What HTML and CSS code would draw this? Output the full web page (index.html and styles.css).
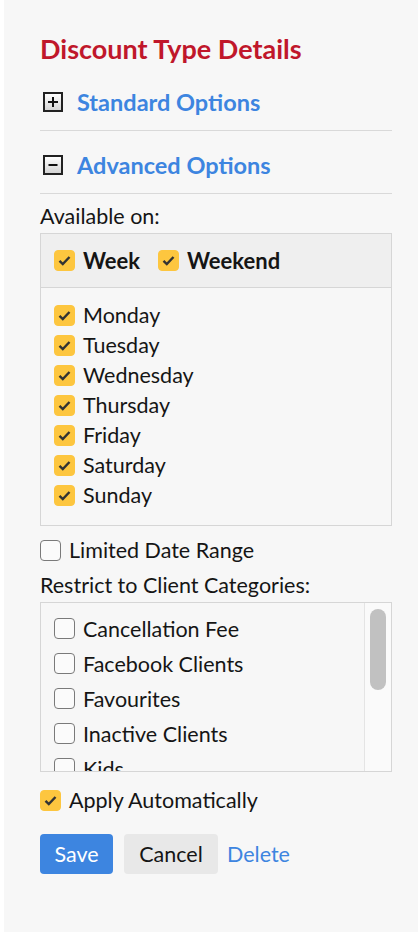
FILE: index.html
```
<!doctype html>
<html>
<head>
<meta charset="utf-8">
<title>Discount Type Details</title>
<link rel="stylesheet" href="styles.css">
</head>
<body>

<div class="panel">

<h2 class="panel-title">Discount Type Details</h2>

<div class="toggle-row">
<span class="toggle-box"><svg width="12" height="12" viewBox="0 0 12 12"><path d="M1 6h10M6 1v10" stroke="#111" stroke-width="2"/></svg></span>
<a class="toggle-link" href="#">Standard Options</a>
</div>

<div class="toggle-row">
<span class="toggle-box"><svg width="12" height="12" viewBox="0 0 12 12"><path d="M1.5 6h9" stroke="#111" stroke-width="2"/></svg></span>
<a class="toggle-link" href="#">Advanced Options</a>
</div>

<div class="field-label">Available on:</div>

<div class="days-box">
<div class="days-head">
<label class="check-item bold"><span class="check on"><svg width="13" height="11" viewBox="0 0 13 11"><path d="M1.5 5.8l3.3 3.3L11.5 2" fill="none" stroke="#333" stroke-width="2.4"/></svg></span>Week</label>
<label class="check-item bold"><span class="check on"><svg width="13" height="11" viewBox="0 0 13 11"><path d="M1.5 5.8l3.3 3.3L11.5 2" fill="none" stroke="#333" stroke-width="2.4"/></svg></span>Weekend</label>
</div>
<div class="days-list">
<label class="check-item"><span class="check on"><svg width="13" height="11" viewBox="0 0 13 11"><path d="M1.5 5.8l3.3 3.3L11.5 2" fill="none" stroke="#333" stroke-width="2.4"/></svg></span>Monday</label>
<label class="check-item"><span class="check on"><svg width="13" height="11" viewBox="0 0 13 11"><path d="M1.5 5.8l3.3 3.3L11.5 2" fill="none" stroke="#333" stroke-width="2.4"/></svg></span>Tuesday</label>
<label class="check-item"><span class="check on"><svg width="13" height="11" viewBox="0 0 13 11"><path d="M1.5 5.8l3.3 3.3L11.5 2" fill="none" stroke="#333" stroke-width="2.4"/></svg></span>Wednesday</label>
<label class="check-item"><span class="check on"><svg width="13" height="11" viewBox="0 0 13 11"><path d="M1.5 5.8l3.3 3.3L11.5 2" fill="none" stroke="#333" stroke-width="2.4"/></svg></span>Thursday</label>
<label class="check-item"><span class="check on"><svg width="13" height="11" viewBox="0 0 13 11"><path d="M1.5 5.8l3.3 3.3L11.5 2" fill="none" stroke="#333" stroke-width="2.4"/></svg></span>Friday</label>
<label class="check-item"><span class="check on"><svg width="13" height="11" viewBox="0 0 13 11"><path d="M1.5 5.8l3.3 3.3L11.5 2" fill="none" stroke="#333" stroke-width="2.4"/></svg></span>Saturday</label>
<label class="check-item"><span class="check on"><svg width="13" height="11" viewBox="0 0 13 11"><path d="M1.5 5.8l3.3 3.3L11.5 2" fill="none" stroke="#333" stroke-width="2.4"/></svg></span>Sunday</label>
</div>
</div>

<label class="check-item single"><span class="check"></span>Limited Date Range</label>

<div class="field-label restrict">Restrict to Client Categories:</div>

<div class="category-box">
<div class="category-list">
<label class="check-item cat"><span class="check"></span>Cancellation Fee</label>
<label class="check-item cat"><span class="check"></span>Facebook Clients</label>
<label class="check-item cat"><span class="check"></span>Favourites</label>
<label class="check-item cat"><span class="check"></span>Inactive Clients</label>
<label class="check-item cat"><span class="check"></span>Kids</label>
</div>
<div class="scroll-track"><div class="scroll-thumb"></div></div>
</div>

<label class="check-item single apply"><span class="check on"><svg width="13" height="11" viewBox="0 0 13 11"><path d="M1.5 5.8l3.3 3.3L11.5 2" fill="none" stroke="#333" stroke-width="2.4"/></svg></span>Apply Automatically</label>

<div class="actions">
<button class="btn btn-save">Save</button>
<button class="btn btn-cancel">Cancel</button>
<a class="delete-link" href="#">Delete</a>
</div>

</div>

</body>
</html>
```

FILE: styles.css
```
body {
	margin: 0;
	background: #ffffff;
	font-family: Lato, "Open Sans", Arial, sans-serif;
	color: #151515;
}

div.panel {
	margin-left: 4px;
	min-height: 932px;
	padding: 0 26px 0 36px;
	background: #f7f7f7;
	box-sizing: border-box;
}

h2.panel-title {
	margin: 0;
	padding-top: 33px;
	height: 35px;
	line-height: 32px;
	font-size: 27px;
	font-weight: bold;
	color: #c0172b;
	white-space: nowrap;
}

div.toggle-row {
	display: flex;
	align-items: center;
	padding: 20px 0 14px 3px;
	height: 28px;
	border-bottom: solid 1px #d9d9d9;
}

span.toggle-box {
	display: flex;
	align-items: center;
	justify-content: center;
	width: 16px;
	height: 16px;
	border: solid 2px #222;
	background: linear-gradient(#ffffff, #d4d4d4);
	margin-right: 14px;
}

a.toggle-link {
	font-size: 23.5px;
	font-weight: bold;
	color: #3d85e0;
	text-decoration: none;
	line-height: 28px;
}

div.field-label {
	margin-top: 10px;
	margin-bottom: 5px;
	font-size: 21.5px;
	line-height: 24px;
	white-space: nowrap;
}

div.field-label.restrict {
	margin-top: 11px;
}

div.days-box {
	border: solid 1px #d6d6d6;
}

div.days-head {
	display: flex;
	gap: 18px;
	padding: 13px 13px;
	background: #efefef;
	border-bottom: solid 1px #d6d6d6;
}

div.days-list {
	padding: 12px 13px 15px;
}

label.check-item {
	display: flex;
	align-items: center;
	height: 30px;
	font-size: 21.5px;
	white-space: nowrap;
}

label.check-item.bold {
	height: 27px;
	font-size: 22px;
	font-weight: bold;
}

label.check-item.single {
	height: 24px;
	margin-top: 12px;
}

label.check-item.apply {
	margin-top: 16px;
}

label.check-item.cat {
	height: 35px;
	flex-shrink: 0;
}

span.check {
	display: flex;
	align-items: center;
	justify-content: center;
	width: 19px;
	height: 19px;
	margin-right: 8px;
	border: solid 1px #7a7a7a;
	border-radius: 4px;
	background: #fbfbfb;
	flex-shrink: 0;
}

span.check.on {
	background: #fdc63f;
	border-color: #fdc63f;
}

div.category-box {
	display: flex;
	height: 168px;
	border: solid 1px #d6d6d6;
}

div.category-list {
	flex: 1;
	display: flex;
	flex-direction: column;
	padding: 8px 13px 0;
	overflow: hidden;
}

div.scroll-track {
	width: 27px;
	border-left: solid 1px #e4e4e4;
	background: #fafafa;
	padding: 6px 0 0 5px;
	box-sizing: border-box;
}

div.scroll-thumb {
	width: 16px;
	height: 81px;
	border-radius: 8px;
	background: #c1c1c1;
}

div.actions {
	display: flex;
	align-items: center;
	margin-top: 22px;
}

button.btn {
	height: 40px;
	border: none;
	border-radius: 4px;
	font-family: Lato, "Open Sans", Arial, sans-serif;
	font-size: 21.5px;
	padding: 0;
}

button.btn-save {
	width: 73px;
	background: #3d85e0;
	color: #ffffff;
	margin-right: 11px;
}

button.btn-cancel {
	width: 94px;
	background: #e8e8e8;
	color: #151515;
	margin-right: 9px;
}

a.delete-link {
	font-size: 21.5px;
	color: #3d85e0;
	text-decoration: none;
}
```
